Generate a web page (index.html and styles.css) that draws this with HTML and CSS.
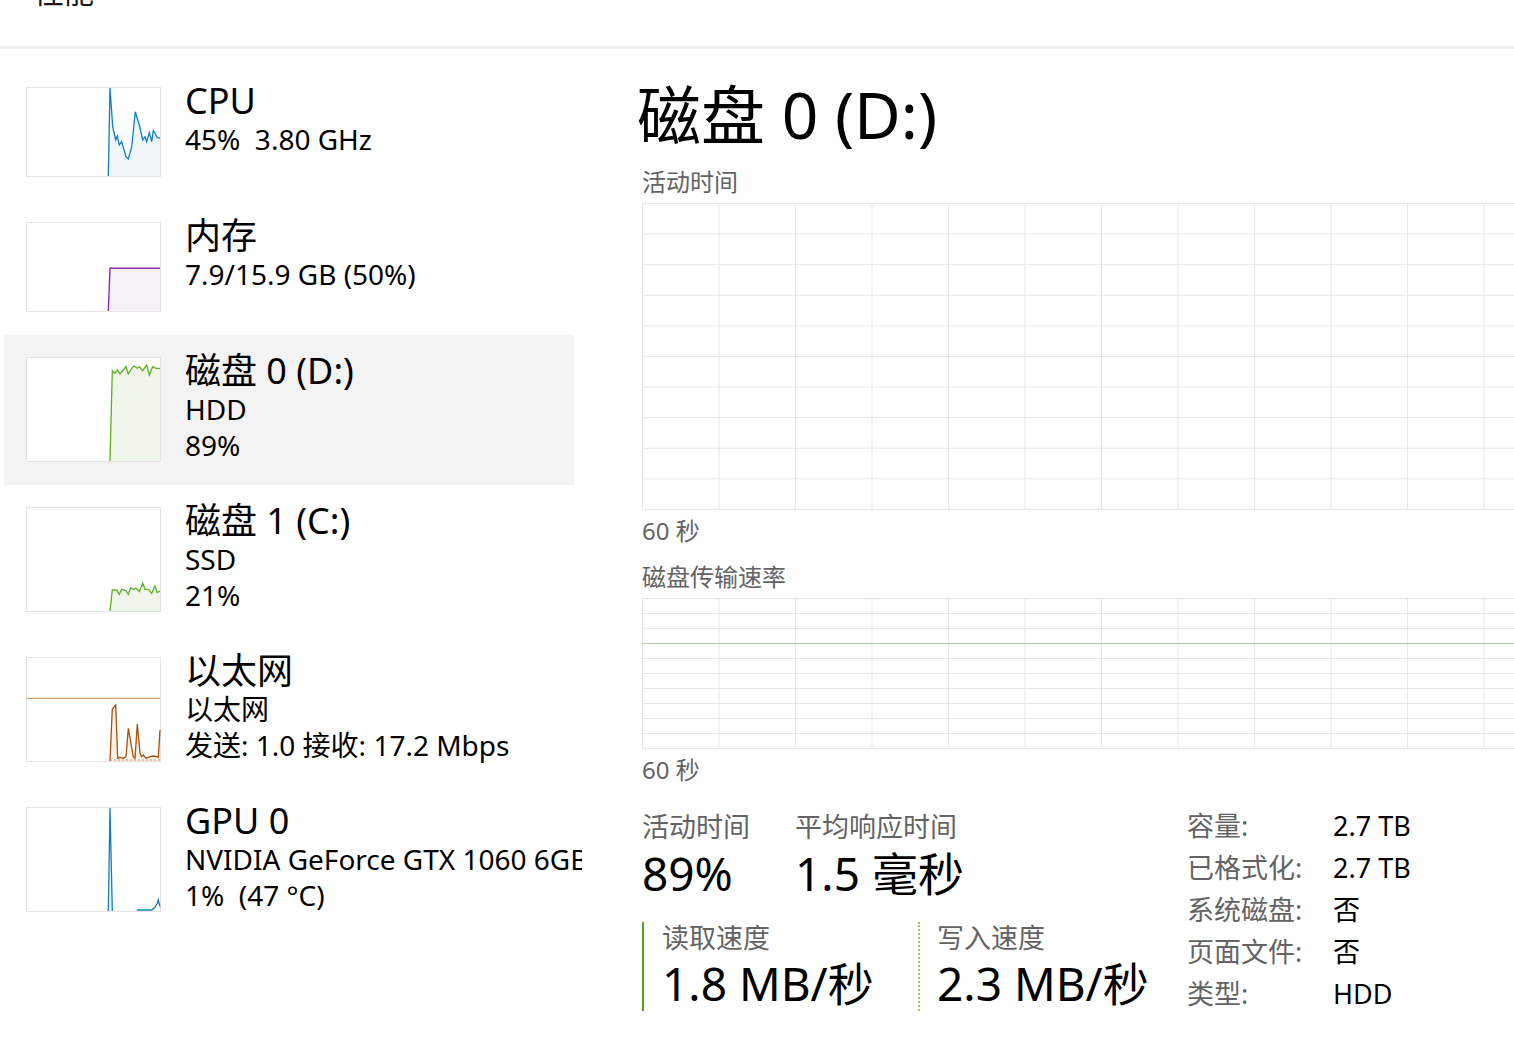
FILE: index.html
```html
<!DOCTYPE html>
<html lang="zh-CN">
<head>
<meta charset="utf-8">
<title>性能</title>
<link rel="stylesheet" href="styles.css">
</head>
<body>
<header class="topbar"><div class="page-title">性能</div></header>
<main class="main">
  <nav class="sidebar">
    <div class="item">
      <div class="thumb">
        <svg width="133" height="88" viewBox="0 0 133 88">
          <polygon class="fill-blue" points="81.3,88 83,0 85.7,38.7 88.7,52 90.3,48 92.3,57 94.7,53.7 99,68.7 101.3,71 104.7,58.7 108.3,23.7 112.3,37 115.7,52 118,48.7 119.7,53.7 122.3,44.7 124.7,53.7 126.3,42.7 130.3,49.3 133,50.3 133,88"/>
          <polyline class="line-blue" points="81.3,88 83,0 85.7,38.7 88.7,52 90.3,48 92.3,57 94.7,53.7 99,68.7 101.3,71 104.7,58.7 108.3,23.7 112.3,37 115.7,52 118,48.7 119.7,53.7 122.3,44.7 124.7,53.7 126.3,42.7 130.3,49.3 133,50.3"/>
        </svg>
      </div>
      <div class="info">
        <div class="name">CPU</div>
        <div class="sub">45%&nbsp; 3.80 GHz</div>
      </div>
    </div>
    <div class="item">
      <div class="thumb">
        <svg width="133" height="88" viewBox="0 0 133 88">
          <polygon class="fill-purple" points="81.3,88 83,45.3 133,45.3 133,88"/>
          <polyline class="line-purple" points="81.3,88 83,45.3 133,45.3"/>
        </svg>
      </div>
      <div class="info">
        <div class="name">内存</div>
        <div class="sub">7.9/15.9 GB (50%)</div>
      </div>
    </div>
    <div class="item tall selected">
      <div class="thumb">
        <svg width="133" height="103" viewBox="0 0 133 103">
          <polygon class="fill-green" points="83,103 85.3,12.7 88,15.3 90.3,12 93,16 96.3,12 99,8.7 101.3,16 104.7,10.3 107,8 110.3,10.3 112.3,8.7 115.7,12.7 119.7,7 122.3,17 125.7,8.7 129,10.3 133,10.3 133,103"/>
          <polyline class="line-green" points="83,103 85.3,12.7 88,15.3 90.3,12 93,16 96.3,12 99,8.7 101.3,16 104.7,10.3 107,8 110.3,10.3 112.3,8.7 115.7,12.7 119.7,7 122.3,17 125.7,8.7 129,10.3 133,10.3"/>
        </svg>
      </div>
      <div class="info">
        <div class="name">磁盘 0 (D:)</div>
        <div class="sub">HDD</div>
        <div class="sub">89%</div>
      </div>
    </div>
    <div class="item tall">
      <div class="thumb">
        <svg width="133" height="103" viewBox="0 0 133 103">
          <polygon class="fill-green" points="83,103 85.3,82 89.7,82 92.3,86.3 94.7,81.3 99,82.7 101.3,86.3 103.7,79.7 106.3,81.3 109,80.3 112.3,83.7 115.7,75.3 118,81.3 121.3,81.3 124.7,85.3 128,78 130.3,84.7 133,82.7 133,103"/>
          <polyline class="line-green" points="83,103 85.3,82 89.7,82 92.3,86.3 94.7,81.3 99,82.7 101.3,86.3 103.7,79.7 106.3,81.3 109,80.3 112.3,83.7 115.7,75.3 118,81.3 121.3,81.3 124.7,85.3 128,78 130.3,84.7 133,82.7"/>
        </svg>
      </div>
      <div class="info">
        <div class="name">磁盘 1 (C:)</div>
        <div class="sub">SSD</div>
        <div class="sub">21%</div>
      </div>
    </div>
    <div class="item tall">
      <div class="thumb">
        <svg width="133" height="103" viewBox="0 0 133 103">
          <line class="line-orange-light" x1="0" y1="40.3" x2="133" y2="40.3"/>
          <polygon class="fill-orange" points="83,103 85.3,51.3 87.3,48.7 88.7,47 90.7,100.3 93,99.3 96.3,100.3 99,98.7 101.3,70.3 106.3,98.7 108,100.3 110.3,66 113,95.3 114.7,98.7 116.3,97 119,100.3 123,98.7 126.3,98 129.7,98.7 131.3,99.3 133,72 133,103"/>
          <polyline class="line-orange" points="83,103 85.3,51.3 87.3,48.7 88.7,47 90.7,100.3 93,99.3 96.3,100.3 99,98.7 101.3,70.3 106.3,98.7 108,100.3 110.3,66 113,95.3 114.7,98.7 116.3,97 119,100.3 123,98.7 126.3,98 129.7,98.7 131.3,99.3 133,72"/>
          <polyline class="line-orange-dash" points="83,102 133,102"/>
        </svg>
      </div>
      <div class="info">
        <div class="name">以太网</div>
        <div class="sub">以太网</div>
        <div class="sub">发送: 1.0 接收: 17.2 Mbps</div>
      </div>
    </div>
    <div class="item tall">
      <div class="thumb">
        <svg width="133" height="103" viewBox="0 0 133 103">
          <polygon class="fill-blue" points="81.3,103 83,0 85.3,103"/>
          <polyline class="line-blue" points="81.3,103 83,0 85.3,103"/>
          <polyline class="line-blue" points="109.7,102 124.7,102 128,99.3 130.3,95.3 131.3,92 133,98.7"/>
        </svg>
      </div>
      <div class="info">
        <div class="name">GPU 0</div>
        <div class="sub">NVIDIA GeForce GTX 1060 6GB</div>
        <div class="sub">1%&nbsp; (47 °C)</div>
      </div>
    </div>
  </nav>

  <section class="panel">
    <h1 class="disk-title">磁盘 0 (D:)</h1>
    <div class="chart-label">活动时间</div>
    <div class="chart chart-activity"></div>
    <div class="chart-label axis">60 秒</div>
    <div class="chart-label label-gap">磁盘传输速率</div>
    <div class="chart chart-transfer"></div>
    <div class="chart-label axis">60 秒</div>

    <div class="stats">
      <div class="stats-left">
        <div class="stat-row">
          <div class="stat stat-active">
            <div class="stat-label">活动时间</div>
            <div class="stat-value">89%</div>
          </div>
          <div class="stat">
            <div class="stat-label">平均响应时间</div>
            <div class="stat-value">1.5 毫秒</div>
          </div>
        </div>
        <div class="rw-row">
          <div class="rw rw-read">
            <div class="stat-label">读取速度</div>
            <div class="stat-value">1.8 MB/秒</div>
          </div>
          <div class="rw rw-write">
            <div class="stat-label">写入速度</div>
            <div class="stat-value">2.3 MB/秒</div>
          </div>
        </div>
      </div>
      <dl class="props">
        <dt>容量:</dt><dd>2.7 TB</dd>
        <dt>已格式化:</dt><dd>2.7 TB</dd>
        <dt>系统磁盘:</dt><dd>否</dd>
        <dt>页面文件:</dt><dd>否</dd>
        <dt>类型:</dt><dd>HDD</dd>
      </dl>
    </div>
  </section>
</main>
</body>
</html>
```

FILE: styles.css
```css
html, body {
  margin: 0;
  padding: 0;
}
body {
  width: 1514px;
  height: 1042px;
  overflow: hidden;
  background: #ffffff;
  color: #000000;
  font-family: "Noto Sans", "Noto Sans CJK SC", sans-serif;
}

.topbar {
  height: 46px;
  border-bottom: 3px solid #efefef;
  overflow: hidden;
}
.page-title {
  margin: -23px 0 0 34px;
  font-size: 30px;
  line-height: 30px;
  color: #1a1a1a;
}

.main {
  display: flex;
  align-items: flex-start;
  overflow: hidden;
}

/* ---------- sidebar ---------- */
.sidebar {
  width: 578px;
  margin-left: 4px;
  padding-top: 16px;
  flex: none;
  overflow: hidden;
}
.item {
  width: 570px;
  height: 135px;
  box-sizing: border-box;
  padding: 22px 0 0 22px;
  display: flex;
  align-items: flex-start;
  gap: 24px;
}
.item.tall {
  height: 150px;
}
.item.selected {
  background: #f3f3f3;
}
.thumb {
  width: 135px;
  height: 90px;
  box-sizing: border-box;
  border: 1px solid #e4e4e4;
  background: #ffffff;
  flex: none;
}
.item.tall .thumb {
  height: 105px;
}
.thumb svg {
  display: block;
  overflow: visible;
}
.info {
  margin-top: -7px;
  white-space: nowrap;
}
.name {
  font-size: 36px;
  line-height: 41px;
}
.sub {
  font-size: 28px;
  line-height: 36px;
}

.fill-blue { fill: #f1f6fb; }
.line-blue { fill: none; stroke: #117dbb; stroke-width: 1.3; }
.fill-purple { fill: #f4f2f4; }
.line-purple { fill: none; stroke: #8b2cbc; stroke-width: 1.4; }
.fill-green { fill: #eff6e9; }
.line-green { fill: none; stroke: #5cae24; stroke-width: 1.3; }
.fill-orange { fill: #fcf2ea; }
.line-orange { fill: none; stroke: #a7500b; stroke-width: 1.3; }
.line-orange-light { stroke: #d39c72; stroke-width: 1.3; }
.line-orange-dash { fill: none; stroke: #d88a5a; stroke-width: 1; stroke-dasharray: 2 2; }

/* ---------- detail panel ---------- */
.panel {
  margin-left: 60px;
  padding-top: 28px;
  width: 1530px;
  flex: none;
}
.disk-title {
  margin: 0 0 0 -5px;
  font-size: 64px;
  line-height: 76px;
  font-weight: normal;
}
.chart-label {
  margin-top: 13px;
  margin-bottom: 5px;
  font-size: 24px;
  line-height: 32px;
  color: #636363;
}
.chart-label.axis {
  margin-top: 5px;
  margin-bottom: 0;
}
.chart-label.label-gap {
  margin-top: 14px;
}
.chart {
  width: 1530px;
  box-sizing: border-box;
  background-color: #ffffff;
}
.chart-activity {
  height: 307px;
  background-image:
    linear-gradient(to right, #e6e6e6 1px, transparent 1px),
    linear-gradient(to bottom, #e6e6e6 1px, transparent 1px);
  background-size: 76.5px 100%, 100% 30.6px;
}
.chart-transfer {
  height: 151px;
  background-image:
    linear-gradient(to bottom, transparent 45px, #a6d69c 45px, #a6d69c 46px, transparent 46px),
    linear-gradient(to right, #e6e6e6 1px, transparent 1px),
    linear-gradient(to bottom, #e6e6e6 1px, transparent 1px);
  background-size: 100% 100%, 76.5px 100%, 100% 15px;
  background-repeat: no-repeat, repeat, repeat;
}

.stats {
  display: flex;
  margin-top: 23px;
}
.stats-left {
  width: 545px;
  flex: none;
}
.stat-row {
  display: flex;
}
.stat {
  width: 153px;
  flex: none;
}
.stat + .stat {
  width: auto;
}
.stat-label {
  font-size: 27px;
  line-height: 36px;
  color: #636363;
  white-space: nowrap;
}
.stat-value {
  margin-top: 2px;
  font-size: 46px;
  line-height: 52px;
  white-space: nowrap;
}
.rw-row {
  display: flex;
  margin-top: 23px;
}
.rw {
  height: 89px;
  box-sizing: border-box;
}
.rw .stat-label {
  line-height: 32px;
}
.rw .stat-value {
  margin-top: 3px;
}
.rw-read {
  width: 276px;
  padding-left: 18px;
  border-left: 2px solid #4fa51c;
}
.rw-write {
  padding-left: 17px;
  border-left: 2px dotted #8fd14f;
}

.props {
  margin: -4px 0 0 0;
  display: grid;
  grid-template-columns: 146px auto;
  font-size: 27px;
  line-height: 42px;
}
.props dt {
  color: #636363;
}
.props dd {
  margin: 0;
}
```
